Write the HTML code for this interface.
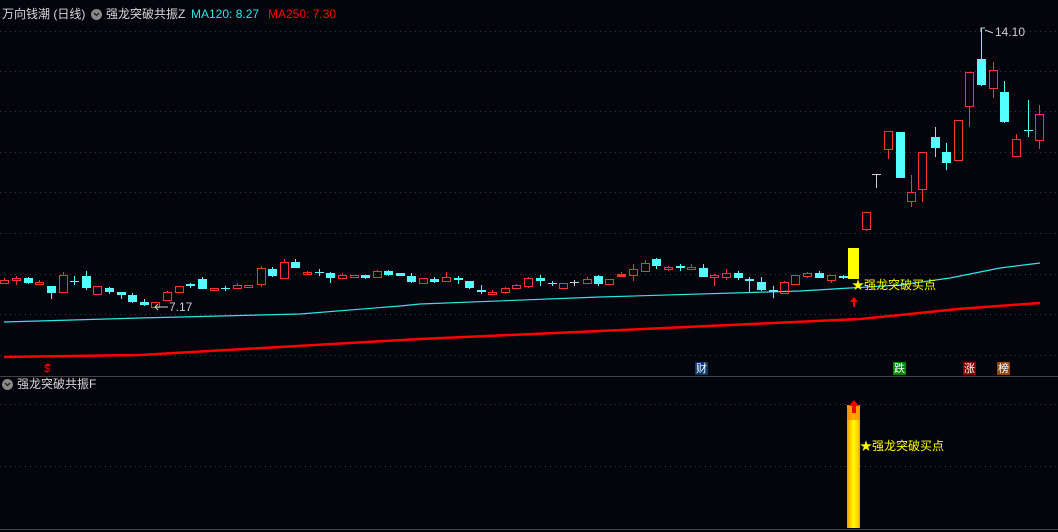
<!DOCTYPE html>
<html><head><meta charset="utf-8"><style>
html,body{margin:0;padding:0;background:#04040c;width:1058px;height:532px;overflow:hidden;font-family:"Liberation Sans","Noto Sans CJK SC",sans-serif}
.t{position:absolute;font-size:12px;white-space:nowrap;line-height:14px}
.b{position:absolute;width:13px;height:13px;font-size:11px;line-height:13px;text-align:center;color:#fff;font-family:"Noto Sans CJK SC",sans-serif}
</style></head><body>
<svg id="s" width="1058" height="532" style="position:absolute;left:0;top:0" xmlns="http://www.w3.org/2000/svg">
<g stroke="#3a3a44" stroke-dasharray="1,4" stroke-width="1">
<line x1="0" y1="31.5" x2="1058" y2="31.5"/><line x1="0" y1="71.5" x2="1058" y2="71.5"/><line x1="0" y1="111.5" x2="1058" y2="111.5"/><line x1="0" y1="152.5" x2="1058" y2="152.5"/><line x1="0" y1="192.5" x2="1058" y2="192.5"/><line x1="0" y1="233.5" x2="1058" y2="233.5"/><line x1="0" y1="274.5" x2="1058" y2="274.5"/><line x1="0" y1="314.5" x2="1058" y2="314.5"/><line x1="0" y1="355.5" x2="1058" y2="355.5"/>
<line x1="0" y1="404.5" x2="1058" y2="404.5"/><line x1="0" y1="466.5" x2="1058" y2="466.5"/>
</g>
<line x1="0" y1="376.5" x2="1058" y2="376.5" stroke="#444" />
<line x1="0" y1="529.5" x2="1058" y2="529.5" stroke="#444" />
<polyline fill="none" stroke="#2ee6e6" stroke-width="1.2" points="4,322 140,318 300,314 400,306 420,304 600,297 800,291 850,288 900,285 950,278 1000,268 1040,263"/>
<polyline fill="none" stroke="#f00" stroke-width="2.5" points="4,357 140,355 420,339 600,331 860,319 910,314 958,309 1040,303"/>
<rect x="848" y="248" width="11" height="31" fill="#ff0"/>
<g id="c" shape-rendering="crispEdges"></g>
<path d="M854 297 L850 302 L853 302 L853 307 L855 307 L855 302 L858 302 Z" fill="#f00"/>
<path d="M48 363 L45 366 L51 366 Z" fill="#f00"/>
<defs><linearGradient id="g" x1="0" x2="1"><stop offset="0" stop-color="#f90"/><stop offset="0.25" stop-color="#fc0"/><stop offset="0.5" stop-color="#ff0"/><stop offset="0.85" stop-color="#fc0"/><stop offset="1" stop-color="#f90"/></linearGradient></defs>
<rect x="847" y="405" width="13" height="123" fill="url(#g)"/>
<rect x="847" y="405" width="13" height="15" fill="#f80" opacity="0.7"/>
<path d="M854 400 L849 406 L852 406 L852 413 L856 413 L856 406 L859 406 Z" fill="#f00"/>
<polyline points="985,28 981,28 981,32" fill="none" stroke="#ccc"/>
<line x1="985" y1="30" x2="993" y2="33" stroke="#ccc"/>
<line x1="155" y1="307" x2="168" y2="307" stroke="#ccc"/><polyline points="158,304 155,307 158,310" fill="none" stroke="#ccc"/>
<circle cx="96.5" cy="14.5" r="5.5" fill="#888"/><polyline points="94,13 96.5,15.5 99,13" fill="none" stroke="#222" stroke-width="1.3"/>
<circle cx="7.5" cy="384.5" r="5.5" fill="#888"/><polyline points="5,383 7.5,385.5 10,383" fill="none" stroke="#222" stroke-width="1.3"/>
</svg>
<div class="t" style="left:2px;top:7px;color:#d8d8d8">万向钱潮 (日线)</div>
<div class="t" style="left:106px;top:7px;color:#d8d8d8">强龙突破共振Z</div>
<div class="t" style="left:191px;top:7px;color:#2ee6e6">MA120: 8.27</div>
<div class="t" style="left:268px;top:7px;color:#f00">MA250: 7.30</div>
<div class="t" style="left:995px;top:25px;color:#ccc">14.10</div>
<div class="t" style="left:169px;top:300px;color:#ccc">7.17</div>
<div class="t" style="left:852px;top:278px;color:#ff0">★强龙突破买点</div>
<div class="t" style="left:860px;top:439px;color:#ff0">★强龙突破买点</div>
<div class="t" style="left:17px;top:377px;color:#d8d8d8">强龙突破共振F</div>
<div class="t" style="left:44px;top:362px;color:#f00;font-size:11px">$</div>
<div class="b" style="left:695px;top:362px;background:#0a3a6a">财</div>
<div class="b" style="left:893px;top:362px;background:#080">跌</div>
<div class="b" style="left:963px;top:362px;background:#800">涨</div>
<div class="b" style="left:997px;top:362px;background:#8b4513">榜</div>
<script>
var d=[[4,'r',280,283,278,283],[16,'r',278,280,276,285],[28,'c',278,283,277,284],[39,'r',282,284,280,284],[51,'c',286,293,286,299],[63,'r',275,292,272,292],[74,'c',281,282,276,285],[86,'c',276,288,271,290],[97,'r',286,294,286,294],[109,'c',288,292,287,294],[121,'c',292,295,292,299],[132,'c',295,302,293,303],[144,'c',302,305,299,306],[155,'r',302,307,302,307],[167,'r',292,300,291,300],[179,'r',286,292,286,292],[190,'c',284,286,283,288],[202,'c',279,289,277,289],[214,'r',288,290,288,290],[225,'c',288,289,286,291],[237,'r',285,288,283,288],[248,'r',285,287,285,287],[261,'r',268,284,266,287],[272,'c',269,276,267,277],[284,'r',262,278,259,278],[295,'c',262,268,259,268],[307,'r',272,273,271,274],[319,'c',272,273,269,276],[330,'c',273,278,272,283],[342,'r',275,278,273,279],[354,'r',275,277,275,277],[365,'c',275,278,275,279],[377,'r',271,277,270,278],[388,'c',271,275,270,276],[400,'c',273,276,273,276],[411,'c',276,282,273,283],[423,'r',278,283,278,283],[434,'c',279,282,277,283],[446,'r',277,281,272,282],[458,'c',278,280,276,284],[469,'c',281,288,281,289],[481,'c',290,292,285,294],[492,'r',292,294,290,294],[505,'r',288,292,287,294],[516,'r',285,288,284,288],[528,'r',278,286,277,288],[540,'c',278,281,275,286],[552,'c',283,284,281,286],[563,'r',283,288,283,288],[574,'g',282,283,280,286],[587,'r',279,283,277,283],[598,'c',276,284,275,286],[609,'r',279,284,279,284],[621,'f',274,277,272,277],[633,'r',269,275,264,281],[645,'r',263,271,260,272],[656,'c',259,266,258,269],[668,'r',267,269,266,271],[680,'c',266,268,264,271],[691,'r',267,269,264,270],[703,'c',268,277,264,277],[714,'r',275,277,274,286],[726,'r',273,277,269,280],[738,'c',273,278,271,280],[749,'c',279,281,277,292],[761,'c',282,290,277,291],[773,'c',290,292,286,298],[784,'r',282,293,281,294],[795,'r',275,284,275,284],[807,'r',273,276,272,278],[819,'c',273,278,271,278],[831,'r',275,280,275,283],[843,'c',276,278,275,279],[866,'r',212,229,212,231],[888,'r',131,149,131,159],[900,'c',132,178,132,178],[911,'r',192,201,175,207],[922,'r',152,189,152,202],[935,'c',137,148,127,157],[946,'c',152,163,143,170],[958,'r',120,160,120,160],[969,'r',72,106,72,127],[981,'c',59,85,28,86],[993,'r',70,88,62,98],[1004,'c',92,122,81,123],[1016,'r',139,156,134,156],[1028,'c',130,131,100,137],[1039,'r',114,140,105,149]];
function R(x,y,w,hh,c){return '<rect x="'+x+'" y="'+y+'" width="'+w+'" height="'+hh+'" fill="'+c+'"/>';}
var h='';d.forEach(function(a){var x=a[0],t=a[1],col=(t=='r'||t=='f')?'#ff3333':(t=='g'?'#ccc':'#54ffff');
var ht=Math.max(a[3]-a[2],1);
if(t=='r'){
 if(a[4]<a[2])h+=R(x,a[4],1,a[2]-a[4],col);
 if(a[5]>a[3])h+=R(x,a[3],1,a[5]-a[3],col);
 var hh=Math.max(ht,2);
 h+=R(x-4,a[2],9,1,col)+R(x-4,a[2]+hh,9,1,col)+R(x-4,a[2],1,hh+1,col)+R(x+4,a[2],1,hh+1,col);
}else{
 h+=R(x,a[4],1,a[5]-a[4],col);
 h+=R(x-4,a[2],9,ht,col);
}});
h+=R(876,174,1,14,'#ccc')+R(872,174,9,1,'#ccc');
document.getElementById('c').innerHTML=h;
</script>
</body></html>
